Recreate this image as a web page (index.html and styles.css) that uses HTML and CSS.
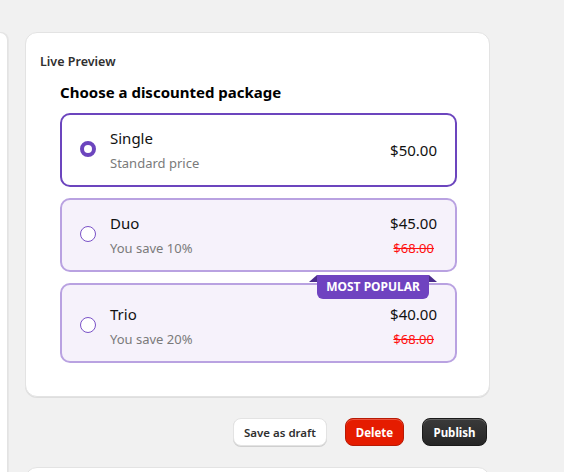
FILE: index.html
```html
<!DOCTYPE html>
<html lang="en">
<head>
<meta charset="utf-8">
<title>Live Preview</title>
<link rel="stylesheet" href="styles.css">
</head>
<body>
<div class="layout">
  <div class="side-card"></div>
  <main class="main-col">
    <section class="card">
      <h2 class="card-title">Live Preview</h2>
      <div class="preview">
        <h3 class="preview-heading">Choose a discounted package</h3>
        <div class="options">
          <label class="option option-selected">
            <span class="radio radio-on"></span>
            <span class="option-text">
              <span class="option-name">Single</span>
              <span class="option-sub">Standard price</span>
            </span>
            <span class="option-price">
              <span class="price">$50.00</span>
            </span>
          </label>
          <label class="option">
            <span class="radio"></span>
            <span class="option-text">
              <span class="option-name">Duo</span>
              <span class="option-sub">You save 10%</span>
            </span>
            <span class="option-price">
              <span class="price">$45.00</span>
              <span class="old-price">$68.00</span>
            </span>
          </label>
          <label class="option option-badged">
            <span class="badge">MOST POPULAR</span>
            <span class="radio"></span>
            <span class="option-text">
              <span class="option-name">Trio</span>
              <span class="option-sub">You save 20%</span>
            </span>
            <span class="option-price">
              <span class="price">$40.00</span>
              <span class="old-price">$68.00</span>
            </span>
          </label>
        </div>
      </div>
    </section>
    <div class="actions">
      <button class="btn btn-plain">Save as draft</button>
      <button class="btn btn-danger">Delete</button>
      <button class="btn btn-primary">Publish</button>
    </div>
    <section class="card card-next"></section>
  </main>
</div>
</body>
</html>
```

FILE: styles.css
```css
* { box-sizing: border-box; }

html, body {
  margin: 0;
  padding: 0;
  background: #f1f1f1;
  font-family: "Noto Sans", "Open Sans", sans-serif;
  color: #303030;
  height: 100%;
  overflow: hidden;
}

.layout {
  display: grid;
  grid-template-columns: 8px 465px;
  column-gap: 17px;
  padding-top: 32px;
}

.side-card {
  background: #fff;
  border: 1px solid #e3e3e3;
  border-left: none;
  border-radius: 0 10px 0 0;
  height: 460px;
  box-shadow: 1px 0 0 rgba(0,0,0,0.04);
}

.main-col {
  display: flex;
  flex-direction: column;
}

.card {
  background: #fff;
  border: 1px solid #e3e3e3;
  border-radius: 12px;
  box-shadow: 0 1px 0 rgba(0,0,0,0.08);
  padding: 21px 14px 33px;
}

.card-title {
  margin: 0;
  font-size: 12.5px;
  font-weight: 600;
  line-height: 16px;
  color: #303030;
}

.preview {
  padding: 12px 18px 0 20px;
}

.preview-heading {
  margin: 0 0 11px;
  font-size: 15px;
  font-weight: 700;
  line-height: 20px;
  color: #000;
}

.options {
  display: flex;
  flex-direction: column;
  gap: 11px;
}

.option {
  position: relative;
  display: flex;
  align-items: center;
  border: 2px solid #b9a2e1;
  background: #f6f2fb;
  border-radius: 10px;
  padding: 13px 18px 13px 18px;
  cursor: pointer;
}

.option-selected {
  border-color: #6c45be;
  background: #fff;
}

.option-badged {
  padding-top: 19px;
}

.radio {
  flex: none;
  width: 16px;
  height: 16px;
  border-radius: 50%;
  border: 1.5px solid #7a52c7;
  background: #fff;
  margin-right: 14px;
  margin-top: -3px;
}

.radio-on {
  border: 4px solid #6c45be;
}

.option-text {
  flex: 1;
  display: flex;
  flex-direction: column;
  gap: 6px;
}

.option-name {
  font-size: 15px;
  line-height: 20px;
  color: #111;
}

.option-sub {
  font-size: 13px;
  line-height: 18px;
  color: #7a7a7a;
}

.option-price {
  display: flex;
  flex-direction: column;
  align-items: flex-end;
  gap: 6px;
}

.price {
  font-size: 15px;
  line-height: 20px;
  color: #111;
}

.old-price {
  font-size: 13px;
  line-height: 18px;
  color: #ff1010;
  text-decoration: line-through;
  padding-right: 3px;
}

.badge {
  position: absolute;
  top: -10px;
  right: 26px;
  height: 24px;
  padding: 0 9px;
  background: #6f43c0;
  color: #fff;
  font-size: 12px;
  font-weight: 700;
  line-height: 24px;
  border-radius: 0 0 6px 6px;
  white-space: nowrap;
}

.badge::before,
.badge::after {
  content: "";
  position: absolute;
  top: 0;
  width: 0;
  height: 0;
  border-bottom: 7px solid #4b2c8c;
}

.badge::before {
  left: -8px;
  border-left: 8px solid transparent;
}

.badge::after {
  right: -8px;
  border-right: 8px solid transparent;
}

.actions {
  display: flex;
  justify-content: flex-end;
  gap: 18px;
  padding: 21px 3px 21px 0;
}

.btn {
  height: 28px;
  border-radius: 8px;
  font-family: inherit;
  font-size: 11.5px;
  font-weight: 600;
  padding: 0;
  white-space: nowrap;
  cursor: pointer;
}

.btn-plain {
  background: #fff;
  color: #303030;
  border: 1px solid #e3e3e3;
  box-shadow: 0 1px 0 #cfcfcf;
  width: 94px;
}

.btn-danger {
  background: #e51c00;
  color: #fff;
  font-weight: 700;
  border: 1px solid #b81a05;
  box-shadow: inset 0 1px 0 rgba(255,255,255,0.25);
  width: 59px;
}

.btn-primary {
  background: linear-gradient(#3a3a3a, #262626);
  color: #fff;
  font-weight: 700;
  border: 1px solid #1a1a1a;
  box-shadow: inset 0 1px 0 rgba(255,255,255,0.2);
  width: 65px;
}

.card-next {
  height: 60px;
  padding: 0;
}
```
